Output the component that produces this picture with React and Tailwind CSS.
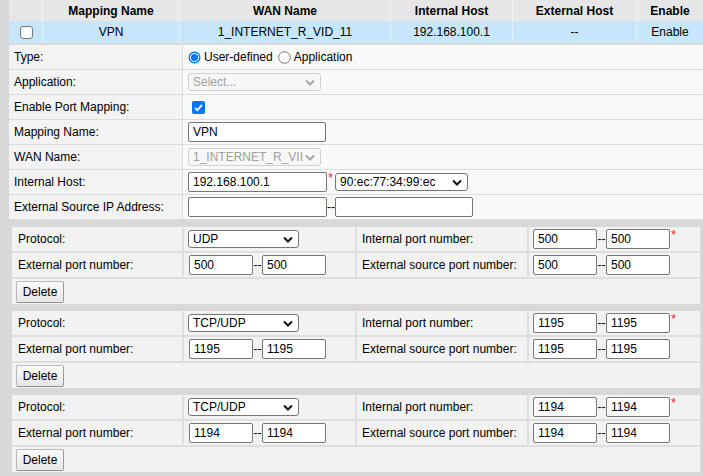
import React from 'react';

const cols = 'grid grid-cols-[34px_137px_211px_122px_124px_1fr]';

function Chevron({ color = '#000' }) {
  return (
    <svg width="10" height="7" viewBox="0 0 10 7" className="shrink-0">
      <path d="M1 1.5 L5 5.5 L9 1.5" fill="none" stroke={color} strokeWidth="2" />
    </svg>
  );
}

function Select({ value, w, disabled }) {
  return (
    <div
      className={
        'flex items-center justify-between h-[18px] rounded-[3px] border pl-[4px] pr-[5px] overflow-hidden whitespace-nowrap ' +
        (disabled ? 'border-[#d0d0d0] bg-[#f7f7f7] text-[#a0a0a0]' : 'border-[#767676] bg-white text-black')
      }
      style={{ width: w }}
    >
      <span className="overflow-hidden">{value}</span>
      <Chevron color={disabled ? '#a8a8a8' : '#111'} />
    </div>
  );
}

function Input({ value = '', w }) {
  return (
    <div
      className="h-[20px] shrink-0 rounded-[2px] border border-[#767676] bg-white pl-[4px] leading-[18px] whitespace-nowrap overflow-hidden"
      style={{ width: w }}
    >
      {value}
    </div>
  );
}

function Star() {
  return <span className="text-[#ff2a2a] self-start mt-[-1px] ml-[1px] text-[13px] leading-[14px]">*</span>;
}

function FormRow({ label, children }) {
  return (
    <div className="grid grid-cols-[174px_1fr] h-[25px] border-b border-[#dcdcdc]">
      <div className="bg-[#f3f3f3] border-r border-[#dcdcdc] pl-[5px] flex items-center whitespace-nowrap">{label}</div>
      <div className="bg-[#f9f9f9] pl-[5px] flex items-center">{children}</div>
    </div>
  );
}

function Radio({ checked }) {
  return (
    <svg width="13" height="13" viewBox="0 0 13 13" className="shrink-0">
      {checked ? (
        <>
          <circle cx="6.5" cy="6.5" r="6" fill="#0075ff" />
          <circle cx="6.5" cy="6.5" r="4.6" fill="#fff" />
          <circle cx="6.5" cy="6.5" r="3.6" fill="#0075ff" />
        </>
      ) : (
        <circle cx="6.5" cy="6.5" r="5.8" fill="#fff" stroke="#767676" strokeWidth="1" />
      )}
    </svg>
  );
}

function Dash() {
  return <span className="w-[9px] shrink-0 text-center whitespace-nowrap">--</span>;
}

function Range({ a, b, star }) {
  return (
    <div className="flex items-center">
      <Input value={a} w={64} />
      <Dash />
      <Input value={b} w={64} />
      {star && <Star />}
    </div>
  );
}

function PortBlock({ proto, ip, ep, sp }) {
  const cell = 'bg-[#f2f2f2] flex items-center whitespace-nowrap';
  return (
    <div className="mt-[7px] mx-[3px] bg-[#dedede] grid grid-cols-[170px_171px_170px_1fr] grid-rows-[24px_24px_25px] gap-x-[2px] gap-y-[2px]">
      <div className={cell + ' pl-[6px]'}>Protocol:</div>
      <div className={cell + ' pl-[4px]'}>
        <Select value={proto} w={111} />
      </div>
      <div className={cell + ' pl-[5px]'}>Internal port number:</div>
      <div className={cell + ' pl-[4px]'}>
        <Range a={ip} b={ip} star />
      </div>
      <div className={cell + ' pl-[6px]'}>External port number:</div>
      <div className={cell + ' pl-[5px]'}>
        <Range a={ep} b={ep} />
      </div>
      <div className={cell + ' pl-[5px]'}>External source port number:</div>
      <div className={cell + ' pl-[4px]'}>
        <Range a={sp} b={sp} />
      </div>
      <div className="col-span-4 bg-[#f2f2f2] pl-[4px] pt-[2px]">
        <button className="h-[22px] w-[48px] rounded-[2px] border border-[#b9b9b9] border-b-[#8f8f8f] border-r-[#9a9a9a] bg-gradient-to-b from-[#fafafa] to-[#e6e6e6] text-[12px]">
          Delete
        </button>
      </div>
    </div>
  );
}

export default function App() {
  return (
    <div className="w-[703px] h-[476px] overflow-hidden bg-[#d8d8d8] pl-[9px] font-['Liberation_Sans',Arial,sans-serif] text-[12px] text-black">
      <div className={cols + ' h-[21px] bg-[#e6e6e6] font-bold'}>
        <div className="border-r border-[#f2f2f2]" />
        <div className="border-r border-[#f2f2f2] flex items-center justify-center">Mapping Name</div>
        <div className="border-r border-[#f2f2f2] flex items-center justify-center">WAN Name</div>
        <div className="border-r border-[#f2f2f2] flex items-center justify-center">Internal Host</div>
        <div className="border-r border-[#f2f2f2] flex items-center justify-center">External Host</div>
        <div className="flex items-center justify-center">Enable</div>
      </div>
      <div className={cols + ' h-[22px] bg-[#c7e5fb]'}>
        <div className="border-r border-[#e3f0fb] flex items-center pl-[11px]">
          <div className="w-[13px] h-[13px] rounded-[3px] border border-[#767676] bg-white" />
        </div>
        <div className="border-r border-[#e3f0fb] flex items-center justify-center">VPN</div>
        <div className="border-r border-[#e3f0fb] flex items-center justify-center">1_INTERNET_R_VID_11</div>
        <div className="border-r border-[#e3f0fb] flex items-center justify-center">192.168.100.1</div>
        <div className="border-r border-[#e3f0fb] flex items-center justify-center">--</div>
        <div className="flex items-center justify-center">Enable</div>
      </div>
      <div className="h-[2px]" />
      <FormRow label="Type:">
        <div className="flex items-center">
          <Radio checked />
          <span className="ml-[3px]">User-defined</span>
          <span className="ml-[5px] flex"><Radio /></span>
          <span className="ml-[3px]">Application</span>
        </div>
      </FormRow>
      <FormRow label="Application:">
        <Select value="Select..." w={133} disabled />
      </FormRow>
      <FormRow label="Enable Port Mapping:">
        <div className="ml-[4px] w-[13px] h-[13px] rounded-[2px] bg-[#0075ff] flex items-center justify-center">
          <svg width="11" height="11" viewBox="0 0 11 11">
            <path d="M2 5.8 L4.4 8.2 L9 2.8" fill="none" stroke="#fff" strokeWidth="1.8" />
          </svg>
        </div>
      </FormRow>
      <FormRow label="Mapping Name:">
        <Input value="VPN" w={138} />
      </FormRow>
      <FormRow label="WAN Name:">
        <Select value="1_INTERNET_R_VII" w={133} disabled />
      </FormRow>
      <FormRow label="Internal Host:">
        <div className="flex items-center">
          <Input value="192.168.100.1" w={139} />
          <Star />
          <span className="ml-[2px]">
            <Select value="90:ec:77:34:99:ec" w={133} />
          </span>
        </div>
      </FormRow>
      <FormRow label="External Source IP Address:">
        <div className="flex items-center">
          <Input w={139} />
          <span className="w-[8px] shrink-0 whitespace-nowrap">--</span>
          <Input w={138} />
        </div>
      </FormRow>
      <PortBlock proto="UDP" ip="500" ep="500" sp="500" />
      <PortBlock proto="TCP/UDP" ip="1195" ep="1195" sp="1195" />
      <PortBlock proto="TCP/UDP" ip="1194" ep="1194" sp="1194" />
    </div>
  );
}
